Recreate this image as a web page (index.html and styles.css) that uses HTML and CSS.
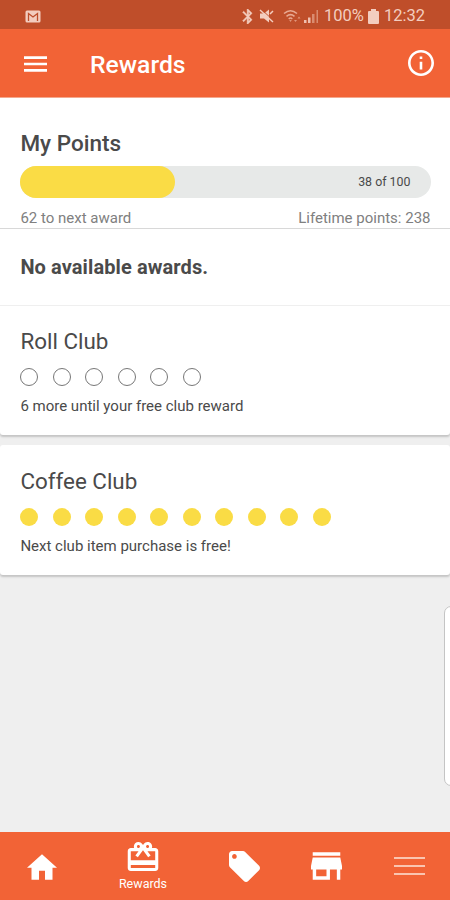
FILE: index.html
```html
<!DOCTYPE html>
<html lang="en">
<head>
    <meta charset="UTF-8">
    <meta name="viewport" content="width=device-width, initial-scale=1.0">
    <title>Rewards</title>
    <link rel="stylesheet" href="styles.css">
</head>
<body>
    <!-- Status Bar -->
    <div class="status-bar">
        <svg class="mail-icon" viewBox="0 0 16 13">
            <rect x="0.5" y="0.5" width="15" height="12" rx="1.5" fill="#f3cdbf"/>
            <path d="M3.500 11V3.500L8 7l4.500-3.500V11" fill="none" stroke="#bd4e2b" stroke-width="1.300"/>
        </svg>
        <div class="status-icons">
            <svg class="bluetooth-icon" viewBox="5 2 13 20"><path stroke="#f3cdbf" stroke-width="0.6" d="M17.710 7.710L12 2h-1v7.590L6.410 5 5 6.410 10.590 12 5 17.590 6.410 19 11 14.410V22h1l5.710-5.710-4.300-4.290 4.300-4.290zM13 5.830l1.880 1.880L13 9.590V5.830zm1.880 10.460L13 18.170v-3.760l1.880 1.880z"/></svg>
            <svg class="mute-icon" viewBox="0 0 16 14">
                <path d="M1 4.500h4l5-4v13l-5-4H1z"/>
                <path d="M2 0l13 12" fill="none" stroke="#bf4e2a" stroke-width="1"/>
                <path d="M1 1l13 12M11 5l3-3" fill="none" stroke="#f3cdbf" stroke-width="1.500"/>
            </svg>
            <svg class="wifi-icon" viewBox="0 0 19 14">
                <path d="M1 4.500Q7.500-1 14 4.500M3.500 7.300Q7.500 4 11.500 7.300M5.700 9.800Q7.500 8.300 9.300 9.800" fill="none" stroke="#e8a993" stroke-width="1.500"/>
                <path d="M6.200 11h2.600l-1.300 2zM11 11l1.500 2 1.500-2zM14.500 9.500l1.500-2 1.500 2z" fill="#e0957b"/>
            </svg>
            <svg class="signal-icon" viewBox="0 0 15 14">
                <path d="M0 11h2.500v3H0zM4 8.500h2.500V14H4z" fill="#efc0b0"/>
                <path d="M8 5h2.500v9H8zM12.500 1H14v13h-1.500z" fill="#da8c70"/>
            </svg>
            <span class="battery-level">100%</span>
            <svg class="battery-icon" viewBox="0 0 11 15"><path d="M3 0h5v2h2q1 0 1 1v11q0 1-1 1H1q-1 0-1-1V3q0-1 1-1h2z"/></svg>
            <span class="clock">12:32</span>
        </div>
    </div>

    <header>
        <svg class="menu-icon" viewBox="3 6 18 12"><path d="M3 18h18v-2H3v2zm0-5h18v-2H3v2zm0-7v2h18V6H3z"/></svg>
        <h1>Rewards</h1>
        <svg class="info-icon" viewBox="2 2 20 20"><path d="M11 17h2v-6h-2v6zm1-15C6.480 2 2 6.480 2 12s4.480 10 10 10 10-4.480 10-10S17.520 2 12 2zm0 18c-4.410 0-8-3.590-8-8s3.590-8 8-8 8 3.590 8 8-3.590 8-8 8zM11 9h2V7h-2v2z"/></svg>
    </header>

    <main>
        <!-- Points -->
        <section class="points">
            <h2>My Points</h2>
            <div class="progress">
                <div class="progress-fill" style="width: 37.8%"></div>
                <span class="progress-label">38 of 100</span>
            </div>
            <div class="points-info">
                <span class="next-award">62 to next award</span>
                <span class="lifetime">Lifetime points: 238</span>
            </div>
        </section>

        <section class="awards">
            <p>No available awards.</p>
        </section>

        <!-- Clubs -->
        <section class="club roll-club">
            <h3>Roll Club</h3>
            <div class="dots">
                <i></i><i></i><i></i><i></i><i></i><i></i>
            </div>
            <p>6 more until your free club reward</p>
        </section>

        <section class="club coffee-club">
            <h3>Coffee Club</h3>
            <div class="dots full">
                <i></i><i></i><i></i><i></i><i></i><i></i><i></i><i></i><i></i><i></i>
            </div>
            <p>Next club item purchase is free!</p>
        </section>

        <div class="edge-panel"></div>
    </main>

    <!-- Bottom Navigation -->
    <nav>
        <a class="home"><svg viewBox="2 3 20 17"><path d="M10 20v-6h4v6h5v-8h3L12 3 2 12h3v8z"/></svg></a>
        <a class="rewards">
            <svg viewBox="2 2 20 19"><path d="M20 6h-2.180c.11-.31.18-.65.18-1 0-1.660-1.340-3-3-3-1.050 0-1.960.54-2.500 1.350l-.5.67-.5-.68C10.960 2.540 10.050 2 9 2 7.340 2 6 3.340 6 5c0 .35.07.69.18 1H4c-1.110 0-1.990.89-1.990 2L2 19c0 1.110.89 2 2 2h16c1.110 0 2-.89 2-2V8c0-1.110-.89-2-2-2zm-5-2c.55 0 1 .45 1 1s-.45 1-1 1-1-.45-1-1 .45-1 1-1zM9 4c.55 0 1 .45 1 1s-.45 1-1 1-1-.45-1-1 .45-1 1-1zm11 15H4v-2h16v2zm0-5H4V8h5.080L7 10.830 8.620 12 11 8.760l1-1.360 1 1.360L15.380 12 17 10.830 14.920 8H20v6z"/></svg>
            <span>Rewards</span>
        </a>
        <a class="offers"><svg viewBox="2 2 20 20"><path d="M21.410 11.580l-9-9C12.050 2.220 11.550 2 11 2H4c-1.100 0-2 .9-2 2v7c0 .55.22 1.050.59 1.420l9 9c.36.36.86.58 1.410.58.55 0 1.050-.22 1.410-.59l7-7c.37-.36.59-.86.59-1.410 0-.55-.23-1.060-.59-1.420zM5.500 7C4.670 7 4 6.330 4 5.500S4.670 4 5.500 4 7 4.670 7 5.500 6.330 7 5.500 7z"/></svg></a>
        <a class="store"><svg viewBox="3 4 18 16"><path d="M20 4H4v2h16V4zm1 10v-2l-1-5H4l-1 5v2h1v6h10v-6h4v6h2v-6h1zm-9 4H6v-4h6v4z"/></svg></a>
        <a class="more"><span></span><span></span><span></span></a>
    </nav>
</body>
</html>
```
FILE: styles.css
```css
/* General Styles */
* {
    box-sizing: border-box;
}

body {
    margin: 0;
    height: 900px;
    font-family: Roboto, "Liberation Sans", sans-serif;
    background-color: #efefef;
    color: #4a4a4a;
    display: flex;
    flex-direction: column;
    overflow: hidden;
}

h1, h2, h3, p {
    margin: 0;
}

svg {
    display: block;
    fill: #fff;
    flex-shrink: 0;
}

/* Status Bar */
.status-bar {
    height: 29px;
    padding: 3px 25px 0;
    background-color: #bf4e2a;
    color: #f3cdbf;
    display: flex;
    justify-content: space-between;
    align-items: center;
}

.status-bar svg {
    fill: #f3cdbf;
}

.mail-icon {
    width: 16px;
    height: 13px;
}

.status-icons {
    display: flex;
    align-items: center;
    font-size: 16.5px;
    line-height: 20px;
}

.bluetooth-icon {
    width: 11px;
    height: 15px;
    margin-right: 6px;
}

.mute-icon {
    width: 16px;
    height: 14px;
    margin-right: 8px;
}

.wifi-icon {
    width: 19px;
    height: 14px;
    margin-right: 2px;
}

.signal-icon {
    width: 15px;
    height: 14px;
    margin-right: 5px;
}

.battery-icon {
    width: 11px;
    height: 15px;
    margin: 0 5px 0 4px;
}

/* Header */
header {
    height: 69px;
    padding: 0 16.5px 0 24px;
    background-color: #f26336;
    border-bottom: 1px solid #f4a88e;
    color: #fff;
    display: flex;
    align-items: center;
}

.menu-icon {
    width: 23px;
    height: 16px;
    margin-top: 1px;
}

h1 {
    flex: 1;
    margin-left: 43px;
    padding-top: 2px;
    font-size: 24.7px;
    font-weight: 500;
}

.info-icon {
    width: 26px;
    height: 26px;
}

/* Content */
main {
    flex: 1;
    position: relative;
}

section {
    background-color: #fff;
    padding: 0 19.5px 0 20.4px;
}

.points {
    height: 131px;
    padding-top: 31px;
    border-bottom: 1px solid #d8d8d8;
}

h2 {
    height: 37px;
    font-size: 22.5px;
    line-height: 28px;
    font-weight: 500;
}

.progress {
    position: relative;
    height: 32px;
    border-radius: 16px;
    background-color: #e7e9e8;
}

.progress-fill {
    height: 100%;
    border-radius: 16px;
    background-color: #fadc45;
}

.progress-label {
    position: absolute;
    top: 8px;
    right: 20px;
    font-size: 12.4px;
    line-height: 16px;
}

.points-info {
    display: flex;
    justify-content: space-between;
    margin-top: 11px;
    font-size: 15px;
    line-height: 18px;
    color: #808080;
}

.awards {
    height: 77px;
    padding-top: 26px;
    border-bottom: 1px solid #efefef;
    font-size: 20px;
    line-height: 24px;
    font-weight: 700;
    letter-spacing: 0.1px;
}

.club {
    height: 129px;
    padding-top: 21px;
    border-radius: 0 0 3px 3px;
    box-shadow: 0 2px 2px #c4c4c4;
}

.coffee-club {
    height: 130px;
    margin-top: 10px;
    padding-top: 22px;
    border-radius: 3px;
}

h3 {
    height: 41px;
    font-size: 22.4px;
    line-height: 28px;
    font-weight: 400;
}

.dots {
    display: flex;
    gap: 14.5px;
}

.dots i {
    width: 18px;
    height: 18px;
    border: 1px solid #777;
    border-radius: 50%;
}

.dots.full i {
    border: none;
    background-color: #fadc45;
}

.club p {
    margin-top: 11px;
    font-size: 15px;
    line-height: 18px;
}

/* Drawer handle on the right edge */
.edge-panel {
    position: absolute;
    top: 508px;
    right: -10px;
    width: 16px;
    height: 180px;
    border: 1px solid #c4c4c4;
    border-radius: 7px;
    background-color: #fff;
}

/* Bottom Navigation */
nav {
    height: 68px;
    background-color: #f26336;
    display: grid;
    grid-template-columns: 83px 120px 82px 83px 82px;
    align-items: center;
    color: #fff;
}

nav a {
    display: flex;
    flex-direction: column;
    align-items: center;
}

.home svg {
    width: 30px;
    height: 26px;
    margin-top: 2px;
}

.rewards svg {
    width: 32px;
    height: 29px;
}

.rewards span {
    margin-top: 6px;
    font-size: 12.5px;
    line-height: 14px;
}

.offers svg {
    width: 31px;
    height: 31px;
}

.store svg {
    width: 31px;
    height: 28px;
}

.more {
    gap: 6px;
}

.more span {
    width: 31px;
    height: 2px;
    background-color: #fac4b0;
}
```
